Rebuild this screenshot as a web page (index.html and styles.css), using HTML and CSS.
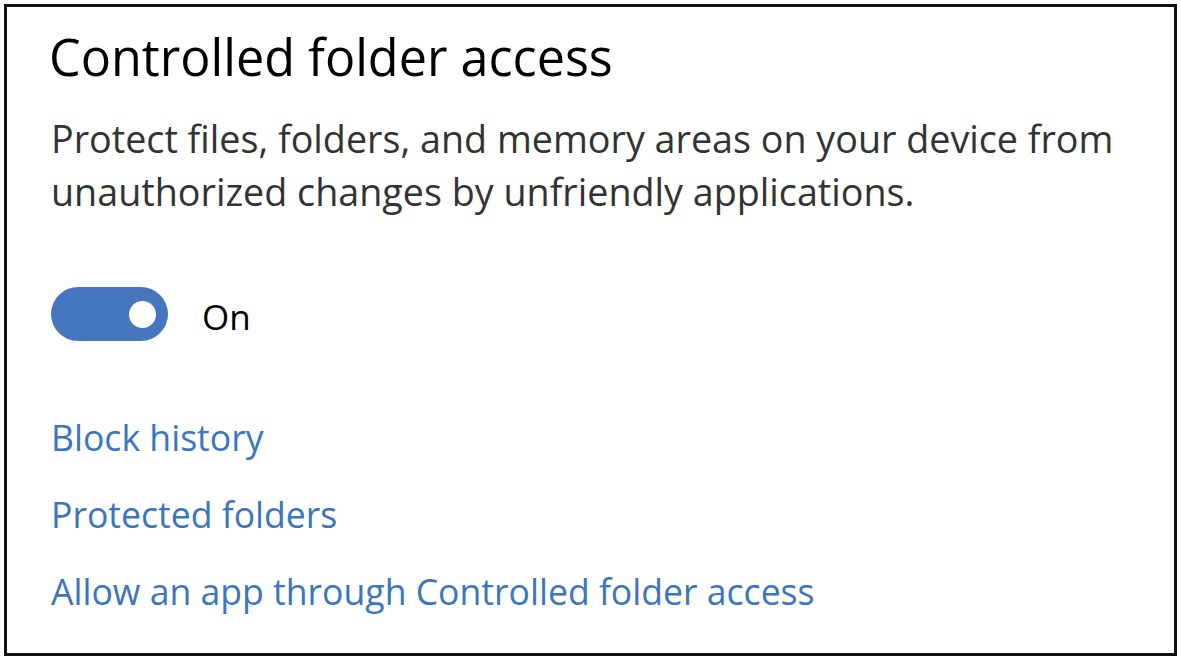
FILE: index.html
```html
<!DOCTYPE html>
<html>
<head>
<meta charset="utf-8">
<link rel="stylesheet" href="styles.css">
</head>
<body>
<div class="card">
  <h1 class="title">Controlled folder access</h1>
  <p class="desc">Protect files, folders, and memory areas on your device from unauthorized changes by unfriendly applications.</p>
  <div class="toggle-row">
    <span class="toggle"><span class="knob"></span></span>
    <span class="toggle-label">On</span>
  </div>
  <div class="links">
    <a class="link">Block history</a>
    <a class="link">Protected folders</a>
    <a class="link">Allow an app through Controlled folder access</a>
  </div>
</div>
</body>
</html>
```
FILE: styles.css
```css
html, body { margin: 0; padding: 0; background: #fff; }
body { font-family: "Open Sans", "Noto Sans", sans-serif; }
.card {
  box-sizing: border-box;
  margin: 4px;
  width: 1173px;
  height: 652px;
  border: 3px solid #111;
  padding: 18px 20px 0 44px;
}
.title {
  margin: 0 0 0 -2px;
  font-weight: 400;
  font-size: 50.3px;
  line-height: 64px;
  color: #000;
}
.desc {
  margin: 23px 0 0 0;
  font-size: 37.7px;
  line-height: 53px;
  color: #333;
  width: 1100px;
}
.toggle-row {
  display: flex;
  align-items: center;
  margin-top: 69px;
  gap: 34px;
}
.toggle {
  box-sizing: border-box;
  width: 117px;
  height: 54px;
  border-radius: 27px;
  background: #4677be;
  display: flex;
  align-items: center;
  justify-content: flex-end;
  padding-right: 12px;
}
.knob { width: 27px; height: 27px; border-radius: 50%; background: #fff; }
.toggle-label { font-size: 35px; color: #000; padding-top: 4px; }
.links { display: flex; flex-direction: column; margin-top: 70px; gap: 24px; }
.link { font-size: 35.6px; line-height: 53px; color: #3a76c0; }
```
